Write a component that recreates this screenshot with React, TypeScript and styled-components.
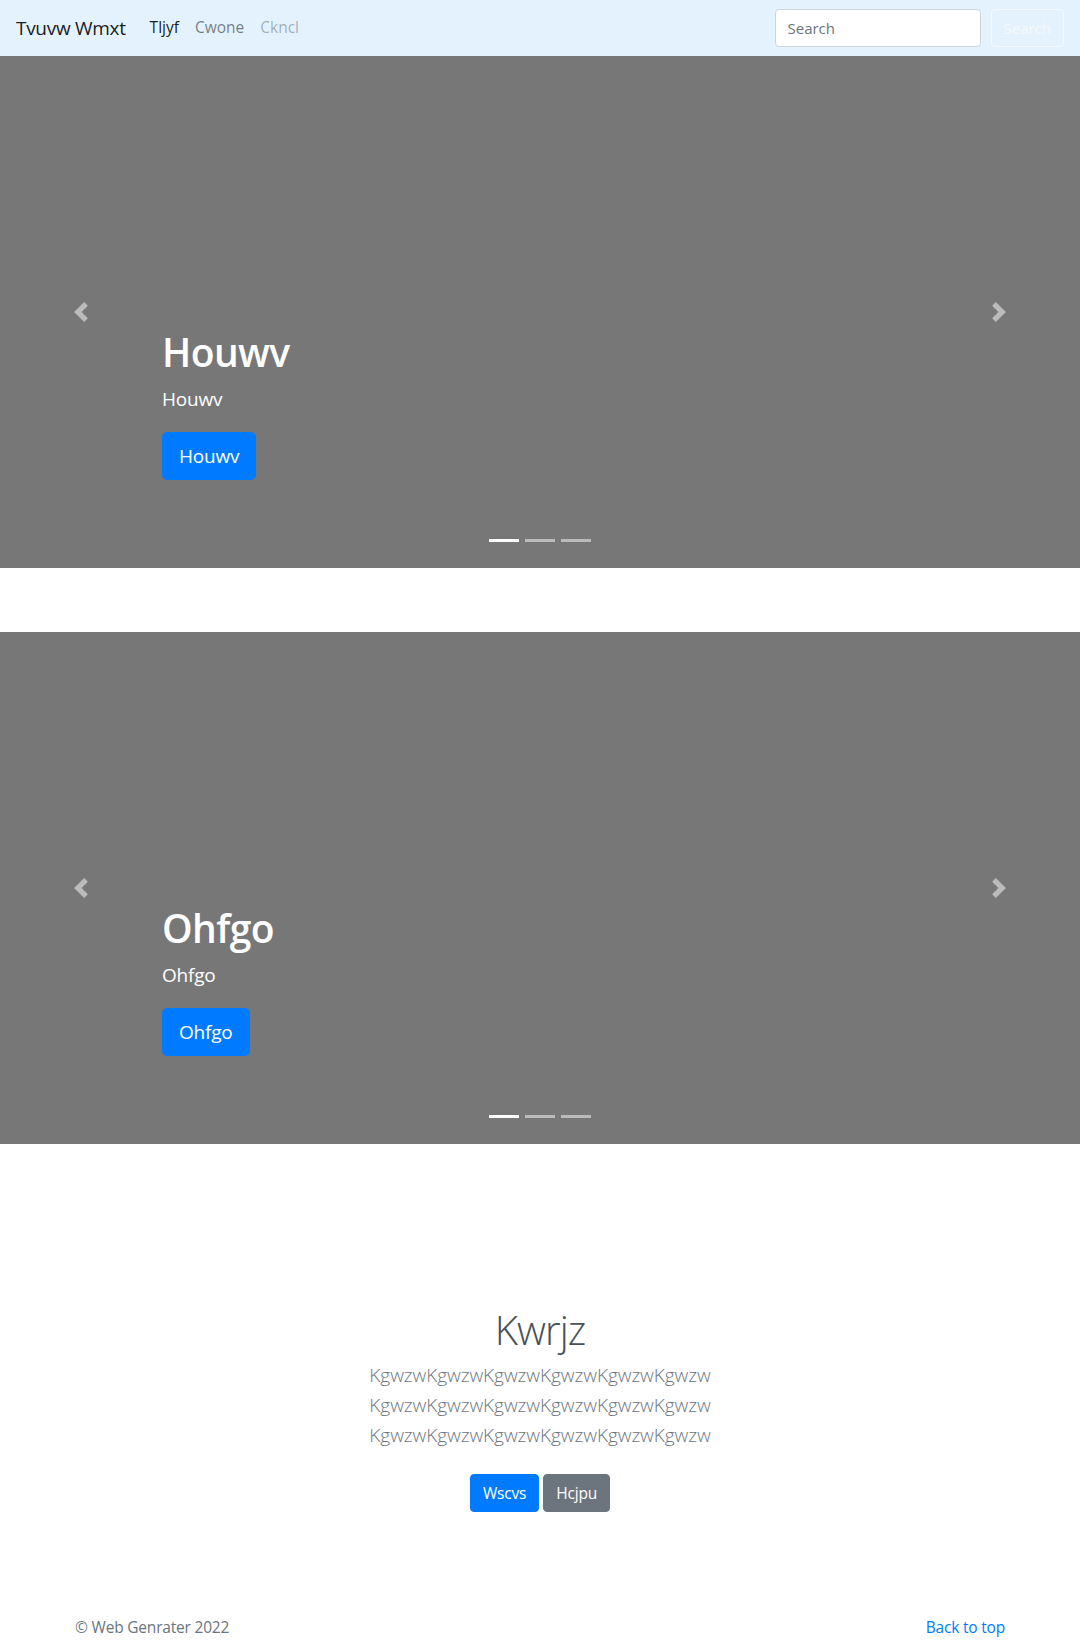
import React from 'react';
import styled, { createGlobalStyle } from 'styled-components';

const GlobalStyle = createGlobalStyle`
  * { box-sizing: border-box; }
  body {
    margin: 0;
    font-family: 'Open Sans', 'Noto Sans', sans-serif;
    font-size: 16px;
    line-height: 1.5;
    color: #212529;
    background: #fff;
  }
`;

// Navbar
const Navbar = styled.nav`
  display: flex;
  align-items: center;
  justify-content: space-between;
  height: 56px;
  padding: 8px 16px;
  background-color: #e3f2fd;
`;

const NavLeft = styled.div`
  display: flex;
  align-items: center;
`;

const Brand = styled.a`
  font-size: 19px;
  line-height: 30px;
  color: rgba(0, 0, 0, 0.9);
  margin-right: 16px;
  text-decoration: none;
  letter-spacing: -0.3px;
`;

const NavLink = styled.a<{ $state: 'active' | 'normal' | 'disabled' }>`
  padding: 8px;
  font-size: 15.5px;
  letter-spacing: 0;
  text-decoration: none;
  color: ${p =>
    p.$state === 'active' ? 'rgba(0,0,0,0.9)' : p.$state === 'disabled' ? 'rgba(0,0,0,0.3)' : 'rgba(0,0,0,0.5)'};
`;

const SearchForm = styled.form`
  display: flex;
  align-items: center;
  gap: 10px;
`;

const SearchInput = styled.input`
  width: 206px;
  height: 38px;
  padding: 6px 12px;
  font-family: inherit;
  font-size: 15px;
  color: #495057;
  background: #fff;
  border: 1px solid #ced4da;
  border-radius: 4px;
  &::placeholder { color: #6c757d; }
`;

const OutlineButton = styled.button`
  height: 38px;
  padding: 6px 12px;
  font-family: inherit;
  font-size: 15px;
  color: #f8f9fa;
  background: transparent;
  border: 1px solid #f8f9fa;
  border-radius: 4px;
`;

// Carousel
const Carousel = styled.div`
  position: relative;
  height: 512px;
  background-color: #777;
  margin-bottom: 64px;
  overflow: hidden;
`;

const Control = styled.div<{ $side: 'prev' | 'next' }>`
  position: absolute;
  top: 0;
  bottom: 0;
  ${p => (p.$side === 'prev' ? 'left: 0;' : 'right: 0;')}
  width: 15%;
  display: flex;
  align-items: center;
  justify-content: center;
  opacity: 0.5;
`;

const Caption = styled.div`
  position: absolute;
  left: 15%;
  right: 15%;
  bottom: 52px;
  padding: 20px 0;
  color: #fff;
  text-align: left;
`;

const CaptionTitle = styled.h1`
  margin: 0 0 8px;
  font-size: 39px;
  font-weight: 600;
  line-height: 48px;
  letter-spacing: -0.6px;
`;

const CaptionText = styled.p`
  margin: 0 0 18px;
  font-size: 19px;
  line-height: 30px;
  letter-spacing: -0.2px;
`;

const ButtonRow = styled.p`
  margin: 0 0 16px;
`;

const Button = styled.a<{ $variant: 'primary' | 'secondary'; $size?: 'lg' }>`
  display: inline-block;
  text-decoration: none;
  color: #fff;
  background-color: ${p => (p.$variant === 'primary' ? '#007bff' : '#6c757d')};
  border: 1px solid ${p => (p.$variant === 'primary' ? '#007bff' : '#6c757d')};
  font-size: ${p => (p.$size === 'lg' ? '19px' : '15.5px')};
  line-height: ${p => (p.$size === 'lg' ? '30px' : '24px')};
  padding: ${p => (p.$size === 'lg' ? '8px 16px' : '6px 12px')};
  border-radius: ${p => (p.$size === 'lg' ? '5px' : '4px')};
  letter-spacing: -0.2px;
`;

const Indicators = styled.ol`
  position: absolute;
  left: 0;
  right: 0;
  bottom: 0;
  display: flex;
  justify-content: center;
  margin: 0 0 16px;
  padding: 0;
  list-style: none;
`;

const Indicator = styled.li<{ $active?: boolean }>`
  width: 30px;
  height: 3px;
  margin: 10px 3px;
  background-color: #fff;
  opacity: ${p => (p.$active ? 1 : 0.5)};
`;

// Jumbotron section
const Section = styled.section`
  padding: 96px 0 0;
  text-align: center;
`;

const Inner = styled.div`
  max-width: 450px;
  margin: 0 auto;
`;

const Heading = styled.h1`
  margin: 0 0 4px;
  font-size: 40px;
  font-weight: 300;
  line-height: 52px;
  color: #495057;
  letter-spacing: -0.9px;
`;

const Lead = styled.p`
  margin: 0 0 24px;
  font-size: 19px;
  font-weight: 300;
  line-height: 30px;
  color: #6c757d;
  letter-spacing: -0.05px;
`;

const Actions = styled.div`
  display: flex;
  justify-content: center;
  gap: 4px;
`;

const Footer = styled.footer`
  max-width: 960px;
  margin: 0 auto;
  padding: 104px 15px 48px;
  display: flex;
  justify-content: space-between;
  color: #6c757d;
  font-size: 15.5px;
  letter-spacing: -0.2px;
`;

const FooterLink = styled.a`
  color: #007bff;
  text-decoration: none;
`;

const Chevron: React.FC<{ dir: 'prev' | 'next' }> = ({ dir }) => (
  <svg width="20" height="20" viewBox="0 0 8 8" fill="#fff">
    {dir === 'prev' ? (
      <path d="M5.25 0l-4 4 4 4 1.5-1.5L4.25 4l2.5-2.5L5.25 0z" />
    ) : (
      <path d="M2.75 0l-1.5 1.5L3.75 4l-2.5 2.5L2.75 8l4-4-4-4z" />
    )}
  </svg>
);

const Slide: React.FC<{ title: string }> = ({ title }) => (
  <Carousel>
    <Indicators>
      <Indicator $active />
      <Indicator />
      <Indicator />
    </Indicators>
    <Caption>
      <CaptionTitle>{title}</CaptionTitle>
      <CaptionText>{title}</CaptionText>
      <ButtonRow>
        <Button $variant="primary" $size="lg" href="#">{title}</Button>
      </ButtonRow>
    </Caption>
    <Control $side="prev"><Chevron dir="prev" /></Control>
    <Control $side="next"><Chevron dir="next" /></Control>
  </Carousel>
);

const word = 'Kgwzw'.repeat(6);

const App: React.FC = () => (
  <>
    <GlobalStyle />
    <Navbar>
      <NavLeft>
        <Brand href="#">Tvuvw Wmxt</Brand>
        <NavLink $state="active" href="#">Tljyf</NavLink>
        <NavLink $state="normal" href="#">Cwone</NavLink>
        <NavLink $state="disabled" href="#">Ckncl</NavLink>
      </NavLeft>
      <SearchForm onSubmit={e => e.preventDefault()}>
        <SearchInput type="search" placeholder="Search" />
        <OutlineButton type="submit">Search</OutlineButton>
      </SearchForm>
    </Navbar>

    <Slide title="Houwv" />
    <Slide title="Ohfgo" />

    <Section>
      <Inner>
        <Heading>Kwrjz</Heading>
        <Lead>{word} {word} {word}</Lead>
        <Actions>
          <Button $variant="primary" href="#">Wscvs</Button>
          <Button $variant="secondary" href="#">Hcjpu</Button>
        </Actions>
      </Inner>
    </Section>

    <Footer>
      <span>© Web Genrater 2022</span>
      <FooterLink href="#">Back to top</FooterLink>
    </Footer>
  </>
);

export default App;
